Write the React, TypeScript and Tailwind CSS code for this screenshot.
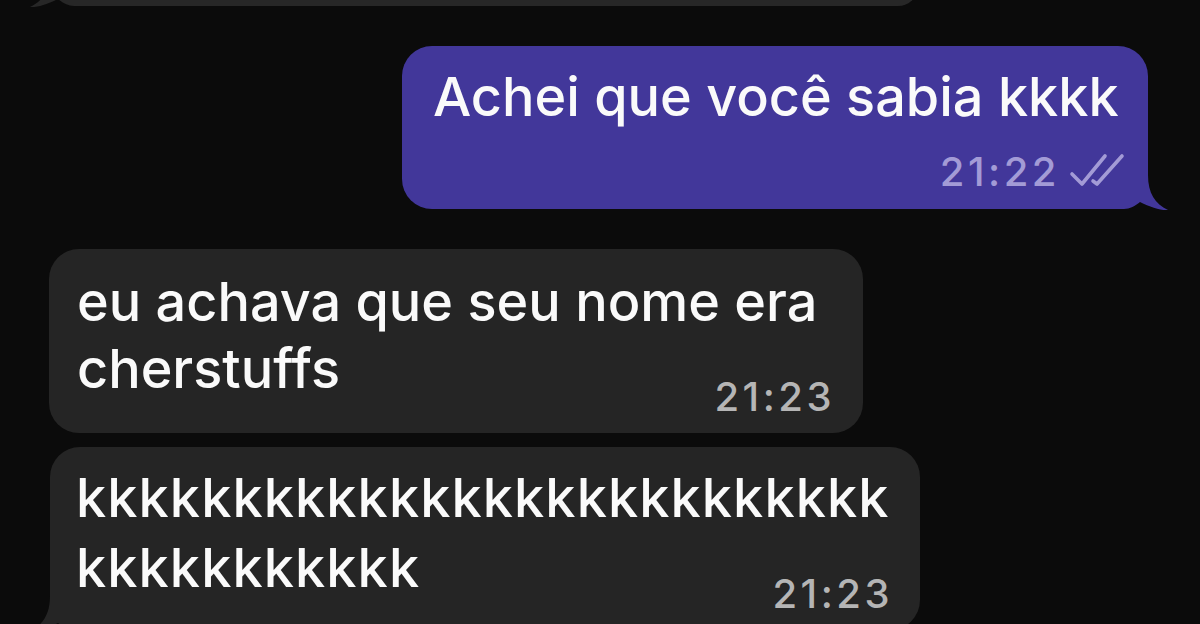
import React from 'react'

const BG = '#0b0b0b'

function Tail({ fill, side }: { fill: string; side: 'left' | 'right' }) {
  return (
    <svg
      width="46"
      height="42"
      viewBox="0 0 46 42"
      className={side === 'right' ? 'absolute right-[-22px] bottom-[-2px]' : 'absolute left-[-22px] bottom-[-2px] -scale-x-100'}
    >
      <rect x="0" y="0" width="46" height="42" fill={BG} />
      <path d="M0 0 H24 V6 C24 24 31 35 44 41 C36 41.5 26 38 16 33 C11 37 6 40 0 40 Z" fill={fill} />
    </svg>
  )
}

function DoubleCheck() {
  return (
    <svg width="58" height="38" viewBox="0 0 58 38" className="mt-[-1px] ml-[8px]" fill="none" stroke="#a39bd6" strokeWidth="3.6" strokeLinecap="round" strokeLinejoin="round">
      <path d="M4 22 L14 32 L37 4" />
      <path d="M25 29 L29 32 L54 4" />
    </svg>
  )
}

export default function App() {
  return (
    <div className="h-[624px] overflow-hidden bg-[#0b0b0b] font-['Inter','Liberation_Sans',sans-serif] font-medium text-[#fafafa]">
      {/* previous incoming message, mostly scrolled off */}
      <div className="relative ml-[50px] mt-[-34px] h-[40px] w-[868px] rounded-[30px] rounded-bl-none bg-[#272727]">
        <Tail fill="#272727" side="left" />
      </div>

      {/* outgoing */}
      <div className="mt-[40px] flex justify-end pr-[52px]">
        <div className="relative h-[163px] w-[746px] rounded-[30px] rounded-br-none bg-[#42379a] pl-[31px] pr-[22px] pt-[17px]">
          <div className="whitespace-nowrap text-[54px] leading-[68px]">Achei que você sabia kkkk</div>
          <div className="mt-[22px] flex h-[38px] items-start justify-end">
            <span className="text-[40px] leading-[38px] tracking-[3.5px] text-[#a39bd6]">21:22</span>
            <DoubleCheck />
          </div>
          <Tail fill="#42379a" side="right" />
        </div>
      </div>

      {/* incoming */}
      <div className="mt-[40px] ml-[49px] h-[184px] w-[814px] rounded-[30px] bg-[#252525] pl-[28px] pr-[28px] pt-[19px]">
        <div className="whitespace-nowrap text-[54px] leading-[67px]">
          <div>eu achava que seu nome era</div>
          <div>cherstuffs</div>
        </div>
        <div className="mt-[-24px] flex h-[38px] justify-end">
          <span className="text-[40px] leading-[38px] tracking-[3.5px] text-[#b5b5b5]">21:23</span>
        </div>
      </div>

      <div className="relative mt-[14px] ml-[50px] h-[183px] w-[870px] rounded-[30px] rounded-bl-none bg-[#252525] pl-[26px] pr-[27px] pt-[16px]">
        <div className="whitespace-nowrap text-[54px] leading-[70px] tracking-[1.1px]">
          <div>kkkkkkkkkkkkkkkkkkkkkkkkkk</div>
          <div>kkkkkkkkkkk</div>
        </div>
        <div className="mt-[-28px] flex h-[38px] justify-end">
          <span className="text-[40px] leading-[38px] tracking-[3.5px] text-[#b5b5b5]">21:23</span>
        </div>
        <Tail fill="#252525" side="left" />
      </div>
    </div>
  )
}
